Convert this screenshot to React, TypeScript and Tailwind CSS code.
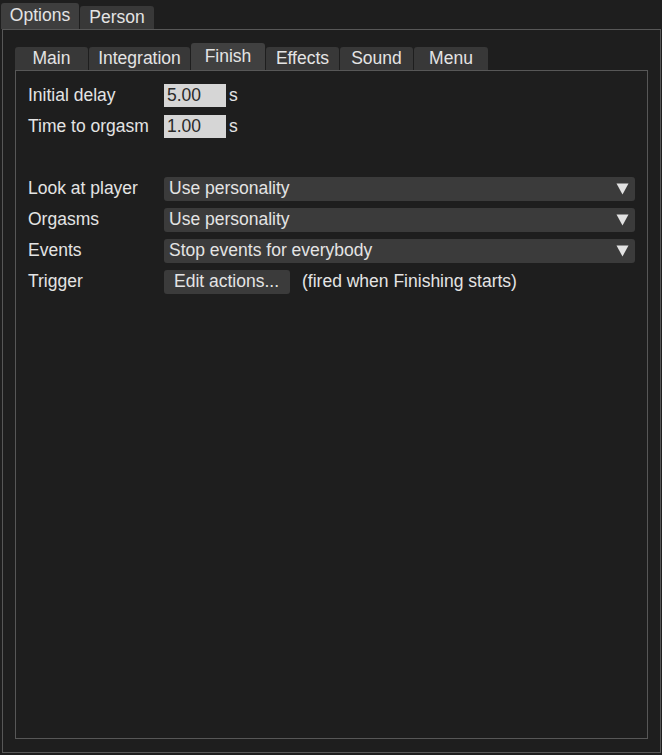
function Arrow() {
  return (
    <svg width="13" height="12" viewBox="0 0 13 12" className="shrink-0">
      <path d="M0.5 0.5 H12.5 L6.5 11.5 Z" fill="#e2e2e2" />
    </svg>
  );
}

function Select({ value }: { value: string }) {
  return (
    <div className="flex h-[24px] w-[471px] items-center justify-between rounded-[3px] bg-[#3b3b3b] pl-[5px] pr-[6px]">
      <span>{value}</span>
      <Arrow />
    </div>
  );
}

function Field({ value }: { value: string }) {
  return (
    <div className="flex items-center gap-[3px]">
      <div className="flex h-[23px] w-[62px] items-center bg-[#d6d6d6] pl-[3px] text-[#2a2a2a]">{value}</div>
      <span>s</span>
    </div>
  );
}

function Row({ label, children }: { label: string; children?: React.ReactNode }) {
  return (
    <div className="flex h-[31px] items-center">
      <div className="w-[136px] shrink-0">{label}</div>
      {children}
    </div>
  );
}

const innerTabs = [
  { name: "Main", w: "w-[73px]" },
  { name: "Integration", w: "w-[101px]" },
  { name: "Finish", w: "w-[74px]", active: true },
  { name: "Effects", w: "w-[73px]" },
  { name: "Sound", w: "w-[73px]" },
  { name: "Menu", w: "w-[74px]" },
];

export default function App() {
  return (
    <div className="h-[755px] w-[662px] bg-[#1e1e1e] font-['Liberation_Sans',Arial,sans-serif] text-[17.5px] leading-none text-[#e4e4e4]">
      <div className="flex h-[29px] items-end gap-[1px] pl-[1px]">
        <div className="flex h-[26px] w-[78px] items-center justify-center rounded-t-[3px] bg-[#3e3e3e]">Options</div>
        <div className="flex h-[23px] w-[74px] items-center justify-center rounded-t-[3px] bg-[#383838]">Person</div>
      </div>
      <div className="ml-[2px] flex h-[724px] w-[659px] flex-col border border-[#575757] px-[12px] pb-[13px]">
        <div className="flex h-[40px] shrink-0 items-end gap-[1px]">
          {innerTabs.map((t) => (
            <div
              key={t.name}
              className={
                t.active
                  ? `flex h-[27px] ${t.w} items-center justify-center rounded-t-[3px] bg-[#404040]`
                  : `flex h-[23px] ${t.w} items-center justify-center rounded-t-[3px] bg-[#383838]`
              }
            >
              {t.name}
            </div>
          ))}
        </div>
        <div className="flex-1 border border-[#575757] pl-[12px] pt-[9px]">
          <Row label="Initial delay">
            <Field value="5.00" />
          </Row>
          <Row label="Time to orgasm">
            <Field value="1.00" />
          </Row>
          <div className="h-[31px]" />
          <Row label="Look at player">
            <Select value="Use personality" />
          </Row>
          <Row label="Orgasms">
            <Select value="Use personality" />
          </Row>
          <Row label="Events">
            <Select value="Stop events for everybody" />
          </Row>
          <Row label="Trigger">
            <div className="flex h-[24px] w-[126px] items-center rounded-[3px] bg-[#3b3b3b] pl-[10px]">Edit actions...</div>
            <span className="ml-[12px]">(fired when Finishing starts)</span>
          </Row>
        </div>
      </div>
    </div>
  );
}
